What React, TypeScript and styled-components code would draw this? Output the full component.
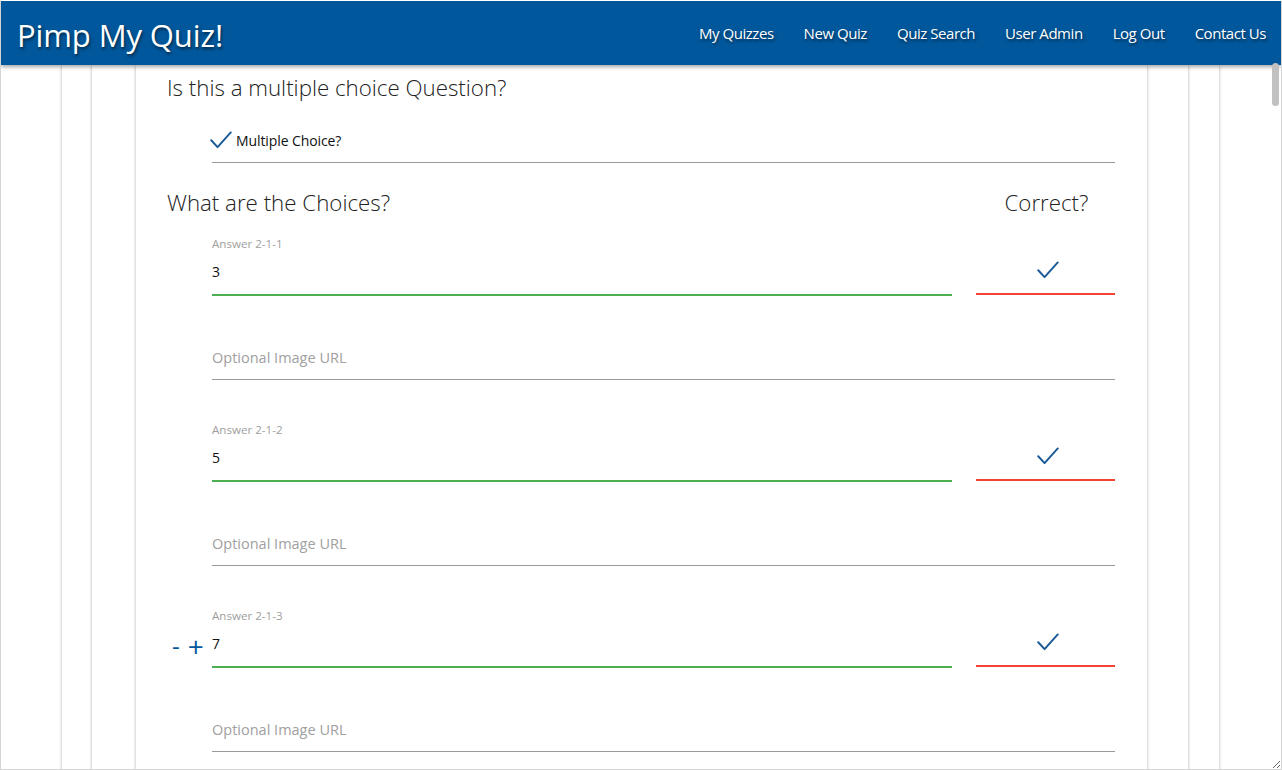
import React from "react";
import styled, { createGlobalStyle } from "styled-components";

const Global = createGlobalStyle`
  html, body { margin: 0; padding: 0; background: #fff; overflow: hidden; }
  body { font-family: "Open Sans", "Noto Sans", Arial, sans-serif; }
  * { box-sizing: border-box; }
`;

const Frame = styled.div`
  width: 1282px;
  height: 770px;
  border: 1px solid #d4d4d4;
  border-top-color: #fff;
  display: flex;
  flex-direction: column;
  overflow: hidden;
  position: relative;
`;

const Header = styled.header`
  height: 64px;
  flex: none;
  background: #01579b;
  display: flex;
  align-items: center;
  justify-content: space-between;
  padding: 0 0 0 16px;
  box-shadow: 0 2px 4px rgba(0, 0, 0, 0.35);
  position: relative;
  z-index: 2;
`;

const Brand = styled.div`
  color: #fff;
  font-size: 31px;
  font-weight: 400;
  letter-spacing: -0.1px;
  text-shadow: 1px 2px 3px rgba(0, 0, 0, 0.55);
  padding-top: 4px;
`;

const Nav = styled.nav`
  display: flex;
  align-items: center;
`;

const NavLink = styled.a`
  color: #fff;
  font-size: 15px;
  padding: 0 15px;
  text-decoration: none;
  text-shadow: 1px 2px 3px rgba(0, 0, 0, 0.5);
  letter-spacing: -0.45px;
`;

const Scroller = styled.div`
  flex: 1;
  overflow-y: scroll;
  overflow-x: hidden;
  resize: both;
  &::-webkit-scrollbar { width: 10px; }
  &::-webkit-scrollbar-track { background: #fff; }
  &::-webkit-scrollbar-thumb {
    background: #c4c4c4;
    border-radius: 5px;
    border: 1px solid #fff;
  }
`;

const ScrollThumb = styled.div`
  position: absolute;
  right: 2px;
  top: 62px;
  width: 7px;
  height: 43px;
  border-radius: 4px;
  background: #c1c1c1;
  z-index: 3;
`;

const Card = styled.div<{ $ml: number; $w: number }>`
  margin-left: ${(p) => p.$ml}px;
  width: ${(p) => p.$w}px;
  background: #fff;
  box-shadow: 0 0 3px rgba(0, 0, 0, 0.32);
  min-height: 100%;
`;

const Content = styled.div`
  padding: 8px 32px 0 31px;
  min-height: 11000px;
`;

const Heading = styled.h2`
  margin: 0;
  font-size: 22.3px;
  font-weight: 300;
  color: #222;
  line-height: 30px;
`;

const HeadRow = styled.div`
  display: grid;
  grid-template-columns: 1fr 139px;
  column-gap: 24px;
  margin-top: 25px;
`;

const CorrectHead = styled(Heading)`
  text-align: center;
  padding-left: 2px;
`;

const CheckRow = styled.div`
  margin-left: 45px;
  height: 60px;
  display: flex;
  align-items: center;
  gap: 4px;
  padding-top: 15px;
  border-bottom: 1px solid #9a9a9a;
`;

const CheckIcon = styled.span`
  display: inline-flex;
  margin-left: -2px;
`;

const CheckText = styled.span`
  font-size: 14px;
  color: #111;
  letter-spacing: -0.1px;
`;

const Block = styled.div<{ $first?: boolean }>`
  display: grid;
  grid-template-columns: 1fr 139px;
  column-gap: 24px;
  margin-left: 45px;
  margin-top: ${(p) => (p.$first ? 16 : 40)}px;
  position: relative;
`;

const Field = styled.div`
  height: 62px;
  display: flex;
  flex-direction: column;
  justify-content: flex-end;
  border-bottom: 2px solid #4caf50;
  padding-bottom: 13px;
`;

const Label = styled.div`
  font-size: 11.6px;
  color: #9e9e9e;
  margin-bottom: 12px;
`;

const Value = styled.div`
  font-size: 14px;
  color: #111;
  line-height: 18px;
`;

const Placeholder = styled.div`
  font-size: 14.5px;
  color: #a0a0a0;
  line-height: 18px;
`;

const CorrectCell = styled.div`
  height: 62px;
  border-bottom: 2px solid #f44336;
  display: flex;
  justify-content: center;
  align-items: flex-end;
  padding: 0 0 14px 4px;
  margin-top: -1px;
`;

const UrlRow = styled.div`
  grid-column: 1 / 3;
  margin-top: 22px;
`;

const UrlField = styled.div`
  height: 62px;
  display: flex;
  align-items: flex-end;
  padding-bottom: 12px;
  border-bottom: 1px solid #9a9a9a;
`;

const Stepper = styled.div`
  position: absolute;
  left: -40px;
  top: 28px;
  display: flex;
  align-items: center;
  gap: 8px;
  color: #01579b;
  font-weight: 400;
`;

const StepMinus = styled.span`
  font-size: 24px;
  line-height: 24px;
`;

const StepPlus = styled.span`
  font-size: 28px;
  line-height: 24px;
`;

const Check = ({ size = 22 }: { size?: number }) => (
  <svg width={size} height={size * 0.8} viewBox="0 0 22 18" fill="none">
    <path d="M1 9.5 L7.5 16.5 L21 1.5" stroke="#1a5a96" strokeWidth="2" strokeLinecap="round" strokeLinejoin="round" />
  </svg>
);

const answers = [
  { n: "2-1-1", v: "3" },
  { n: "2-1-2", v: "5" },
  { n: "2-1-3", v: "7", stepper: true },
];

export default function App() {
  return (
    <>
      <Global />
      <Frame>
        <Header>
          <Brand>Pimp My Quiz!</Brand>
          <Nav>
            {["My Quizzes", "New Quiz", "Quiz Search", "User Admin", "Log Out", "Contact Us"].map((t) => (
              <NavLink key={t} href="#">{t}</NavLink>
            ))}
          </Nav>
        </Header>
        <ScrollThumb />
        <Scroller>
          <Card $ml={61} $w={1157}>
            <Card $ml={30} $w={1096}>
              <Card $ml={44} $w={1011}>
                <Content>
                  <Heading>Is this a multiple choice Question?</Heading>
                  <CheckRow>
                    <CheckIcon>
                      <Check />
                    </CheckIcon>
                    <CheckText>Multiple Choice?</CheckText>
                  </CheckRow>
                  <HeadRow>
                    <Heading>What are the Choices?</Heading>
                    <CorrectHead>Correct?</CorrectHead>
                  </HeadRow>
                  {answers.map((a, i) => (
                    <Block key={a.n} $first={i === 0}>
                      {a.stepper && (
                        <Stepper>
                          <StepMinus>-</StepMinus>
                          <StepPlus>+</StepPlus>
                        </Stepper>
                      )}
                      <Field>
                        <Label>Answer {a.n}</Label>
                        <Value>{a.v}</Value>
                      </Field>
                      <CorrectCell>
                        <Check />
                      </CorrectCell>
                      <UrlRow>
                        <UrlField>
                          <Placeholder>Optional Image URL</Placeholder>
                        </UrlField>
                      </UrlRow>
                    </Block>
                  ))}
                </Content>
              </Card>
            </Card>
          </Card>
        </Scroller>
      </Frame>
    </>
  );
}
